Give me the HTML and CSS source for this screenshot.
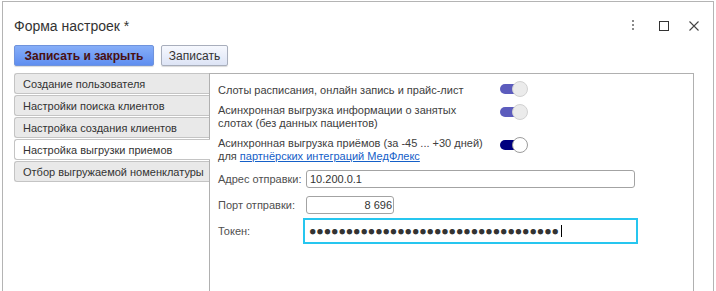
FILE: index.html
```html
<!DOCTYPE html>
<html lang="ru">
<head>
<meta charset="utf-8">
<title>Форма настроек</title>
<link rel="stylesheet" href="styles.css">
</head>
<body>
<div class="window">
  <div class="titlebar">
    <div class="title">Форма настроек *</div>
    <div class="win-controls">
      <svg class="ic-more" width="4" height="12" viewBox="0 0 4 12"><rect x="1" y="0" width="2" height="2" fill="#8a8a8a"/><rect x="1" y="4" width="2" height="2" fill="#8a8a8a"/><rect x="1" y="8" width="2" height="2" fill="#8a8a8a"/></svg>
      <svg class="ic-max" width="10" height="10" viewBox="0 0 10 10"><rect x="0.5" y="0.5" width="9" height="9" fill="none" stroke="#333" stroke-width="1"/></svg>
      <svg class="ic-close" width="10" height="10" viewBox="0 0 10 10"><path d="M0.5 0.5 L9.5 9.5 M9.5 0.5 L0.5 9.5" stroke="#444" stroke-width="1.1" fill="none"/></svg>
    </div>
  </div>
  <div class="toolbar">
    <button class="btn btn-primary">Записать и закрыть</button>
    <button class="btn btn-secondary">Записать</button>
  </div>
  <div class="main">
    <div class="tabs">
      <div class="tab">Создание пользователя</div>
      <div class="tab">Настройки поиска клиентов</div>
      <div class="tab">Настройка создания клиентов</div>
      <div class="tab tab-active">Настройка выгрузки приемов</div>
      <div class="tab">Отбор выгружаемой номенклатуры</div>
    </div>
    <div class="panel">
      <div class="opt-row">
        <div class="opt-text opt-single">Слоты расписания, онлайн запись и прайс-лист</div>
        <div class="toggle"><span class="track"></span><span class="thumb"></span></div>
      </div>
      <div class="opt-row">
        <div class="opt-text">Асинхронная выгрузка информации о занятых<br>слотах (без данных пациентов)</div>
        <div class="toggle"><span class="track"></span><span class="thumb"></span></div>
      </div>
      <div class="opt-row">
        <div class="opt-text">Асинхронная выгрузка приёмов (за -45 ... +30 дней)<br>для <a class="link" href="#">партнёрских интеграций МедФлекс</a></div>
        <div class="toggle toggle-dark"><span class="track"></span><span class="thumb"></span></div>
      </div>
      <div class="fields">
        <div class="field-row">
          <div class="field-label">Адрес отправки:</div>
          <div class="input input-addr">10.200.0.1</div>
        </div>
        <div class="field-row row-port">
          <div class="field-label">Порт отправки:</div>
          <div class="input input-port">8 696</div>
        </div>
        <div class="field-row row-token">
          <div class="field-label">Токен:</div>
          <div class="input input-token"><span class="dots">●●●●●●●●●●●●●●●●●●●●●●●●●●●●●●●●●●</span><span class="caret"></span></div>
        </div>
      </div>
    </div>
  </div>
</div>
</body>
</html>
```

FILE: styles.css
```css
html, body {
  margin: 0;
  padding: 0;
  background: #ffffff;
}
body {
  padding: 1px 2px 0 2px;
  font-family: "Liberation Sans", Arial, sans-serif;
  font-size: 11px;
  color: #404040;
  overflow: hidden;
  height: 291px;
  box-sizing: border-box;
}
.window {
  border: 1px solid #b4b4b4;
  border-bottom: none;
  height: 300px;
  box-sizing: border-box;
  display: flex;
  flex-direction: column;
}
.titlebar {
  display: flex;
  align-items: center;
  justify-content: space-between;
  padding: 14px 14px 0 11px;
  height: 20px;
}
.title {
  font-size: 14px;
  line-height: 20px;
  color: #333333;
}
.win-controls {
  display: flex;
  align-items: center;
}
.ic-more {
  margin-right: 24px;
}
.ic-max {
  margin-right: 20px;
}
.toolbar {
  display: flex;
  gap: 7px;
  padding-left: 11px;
  margin-top: 9px;
}
.btn {
  height: 21px;
  box-sizing: border-box;
  font-family: "Liberation Sans", Arial, sans-serif;
  font-size: 12px;
  padding: 0;
  border-radius: 2px;
  box-shadow: 0 1px 1px rgba(0, 0, 0, 0.15);
}
.btn-primary {
  width: 140px;
  font-weight: bold;
  color: #4a1010;
  background: linear-gradient(#86aef8, #5f8ef0);
  border: 1px solid #6f93dc;
}
.btn-secondary {
  width: 67px;
  color: #333333;
  background: linear-gradient(#f6f8fe, #dde4f5);
  border: 1px solid #a8aebc;
}
.main {
  display: flex;
  padding-left: 11px;
  margin-top: 7px;
  flex: 1;
}
.tabs {
  width: 196px;
  box-sizing: border-box;
  border-right: 1px solid #b0b0b0;
  display: flex;
  flex-direction: column;
  gap: 1px;
}
.tab {
  height: 21px;
  box-sizing: border-box;
  border: 1px solid #c4c4c4;
  border-right: none;
  border-radius: 3px 0 0 3px;
  background: #e9e9e9;
  padding-left: 8px;
  line-height: 21px;
  color: #333333;
  white-space: nowrap;
}
.tab-active {
  background: #ffffff;
  margin-right: -1px;
}
.panel {
  width: 484px;
  box-sizing: border-box;
  border-top: 1px solid #b0b0b0;
  border-right: 1px solid #b0b0b0;
  padding: 7px 0 0 8px;
}
.opt-row {
  display: flex;
  align-items: flex-start;
  margin-bottom: 7px;
}
.opt-text {
  width: 282px;
  line-height: 13px;
  white-space: nowrap;
}
.opt-single {
  padding-top: 3px;
}
.link {
  color: #1560c8;
  text-decoration: underline;
}
.toggle {
  display: flex;
  align-items: center;
  width: 28px;
  height: 16px;
}
.track {
  width: 20px;
  height: 10px;
  border-radius: 5px;
  background: #5c5cbd;
}
.thumb {
  width: 16px;
  height: 16px;
  box-sizing: border-box;
  border-radius: 50%;
  margin-left: -8px;
  background: #ebebeb;
  border: 1px solid #d2d2d2;
}
.toggle-dark .track {
  background: #00007f;
}
.toggle-dark .thumb {
  background: #ffffff;
  border-color: #9c9c9c;
}
.fields {
  margin-top: 1px;
}
.field-row {
  display: flex;
  align-items: center;
}
.field-label {
  width: 88px;
  color: #505050;
  line-height: 13px;
}
.input {
  box-sizing: border-box;
  border: 1px solid #a3a3a3;
  border-radius: 3px;
  height: 18px;
  line-height: 16px;
  padding: 0 3px;
  color: #333333;
  font-size: 11px;
}
.input-addr {
  width: 329px;
}
.row-port {
  margin-top: 8px;
}
.input-port {
  width: 88px;
  text-align: right;
  padding-right: 1px;
}
.row-token {
  margin-top: 6px;
}
.input-token {
  width: 331px;
  height: 22px;
  margin-left: -1px;
  border: 1px solid #ffffff;
  outline: 2px solid #26c6ef;
  border-radius: 0;
  padding-left: 4px;
  display: flex;
  align-items: center;
}
.dots {
  font-family: "DejaVu Sans Mono", monospace;
  font-size: 9px;
  letter-spacing: 1.93px;
  color: #333333;
  line-height: 12px;
}
.caret {
  display: inline-block;
  width: 1px;
  height: 12px;
  background: #000000;
  margin-left: 1px;
}
```
